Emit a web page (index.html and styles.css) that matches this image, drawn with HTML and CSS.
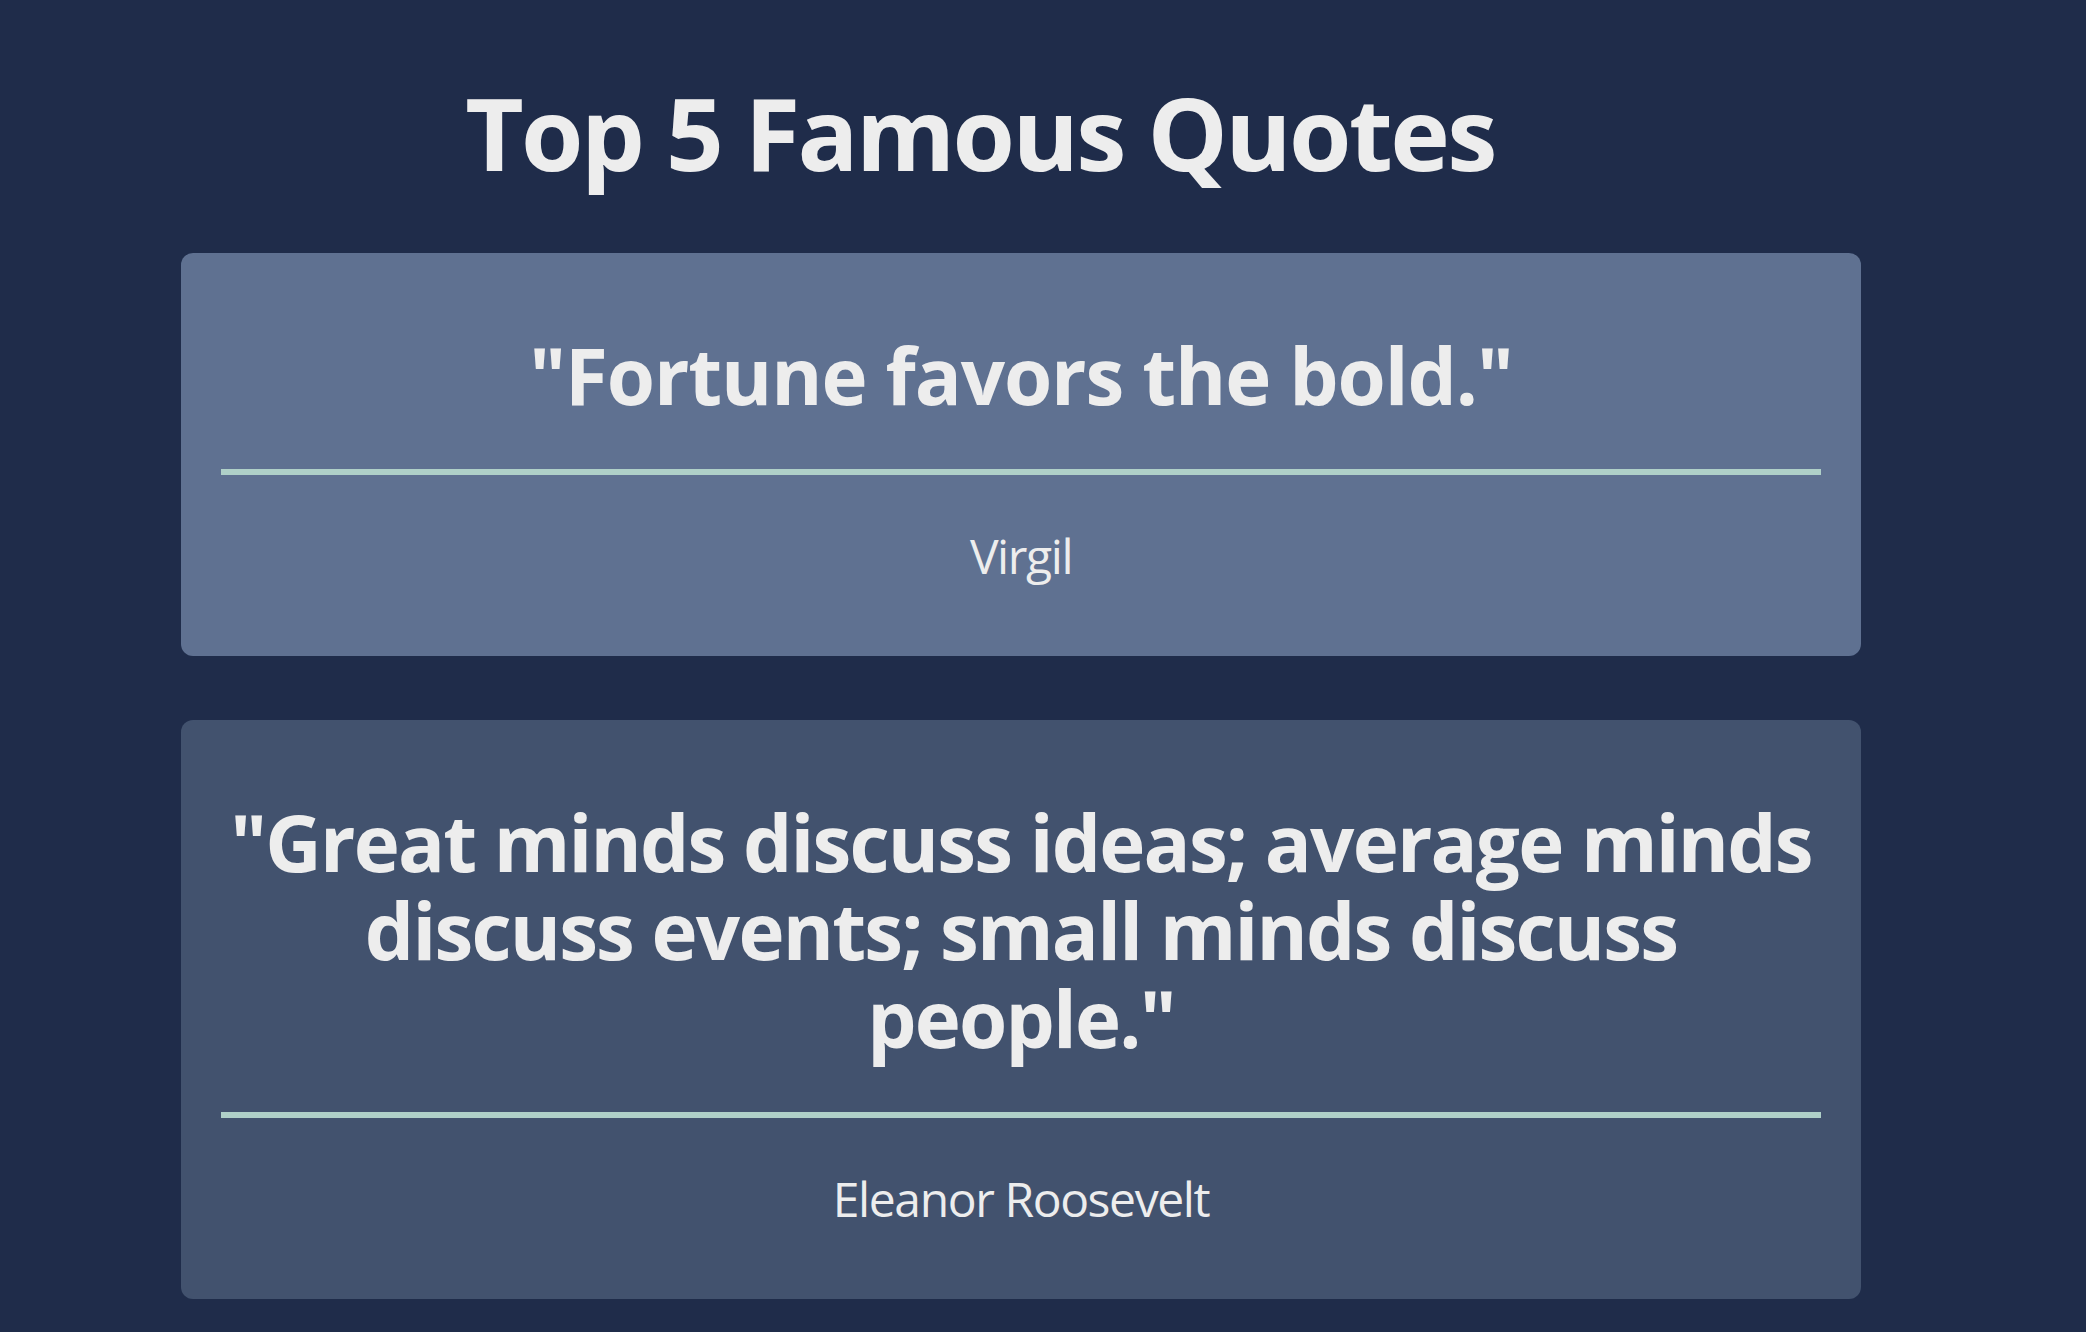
FILE: index.html
```html
<!DOCTYPE html>
<html lang="en">
<head>
<meta charset="utf-8">
<title>Top 5 Famous Quotes</title>
<link rel="stylesheet" href="styles.css">
</head>
<body>
<main class="page">
  <header class="header">
    <h1 class="title">Top 5 Famous Quotes</h1>
  </header>
  <section class="quotes">
    <article class="card card-light">
      <p class="quote quote-short">"Fortune favors the bold."</p>
      <hr class="rule">
      <p class="author">Virgil</p>
    </article>
    <article class="card card-dark">
      <p class="quote">"Great minds discuss ideas; average minds discuss events; small minds discuss people."</p>
      <hr class="rule">
      <p class="author">Eleanor Roosevelt</p>
    </article>
  </section>
</main>
</body>
</html>
```
FILE: styles.css
```css
html, body {
  margin: 0;
  padding: 0;
  background: #1f2c4a;
}

body {
  font-family: "Open Sans", "Noto Sans", sans-serif;
  color: #ededed;
}

.page {
  width: 1680px;
  margin: 0 0 0 181px;
}

.header {
  padding: 72px 82px 0 0;
}

.title {
  margin: 0;
  font-size: 101px;
  line-height: 120px;
  font-weight: 700;
  letter-spacing: -2.6px;
  text-align: center;
}

.quotes {
  display: flex;
  flex-direction: column;
  gap: 64px;
  margin-top: 61px;
}

.card {
  border-radius: 12px;
  padding: 40px;
  text-align: center;
}

.card-light {
  background: #5f7191;
}

.card-dark {
  background: #42526e;
}

.quote {
  margin: 38px 0 0;
  font-size: 78px;
  line-height: 88px;
  font-weight: 700;
  letter-spacing: -1.8px;
}

.quote-short {
  letter-spacing: -1.1px;
}

.rule {
  margin: 50px 0 0;
  height: 6px;
  border: 0;
  background: #afd0c8;
}

.author {
  margin: 49px 0 28px;
  font-size: 48px;
  line-height: 64px;
  font-weight: 400;
  letter-spacing: -1.4px;
}
```
